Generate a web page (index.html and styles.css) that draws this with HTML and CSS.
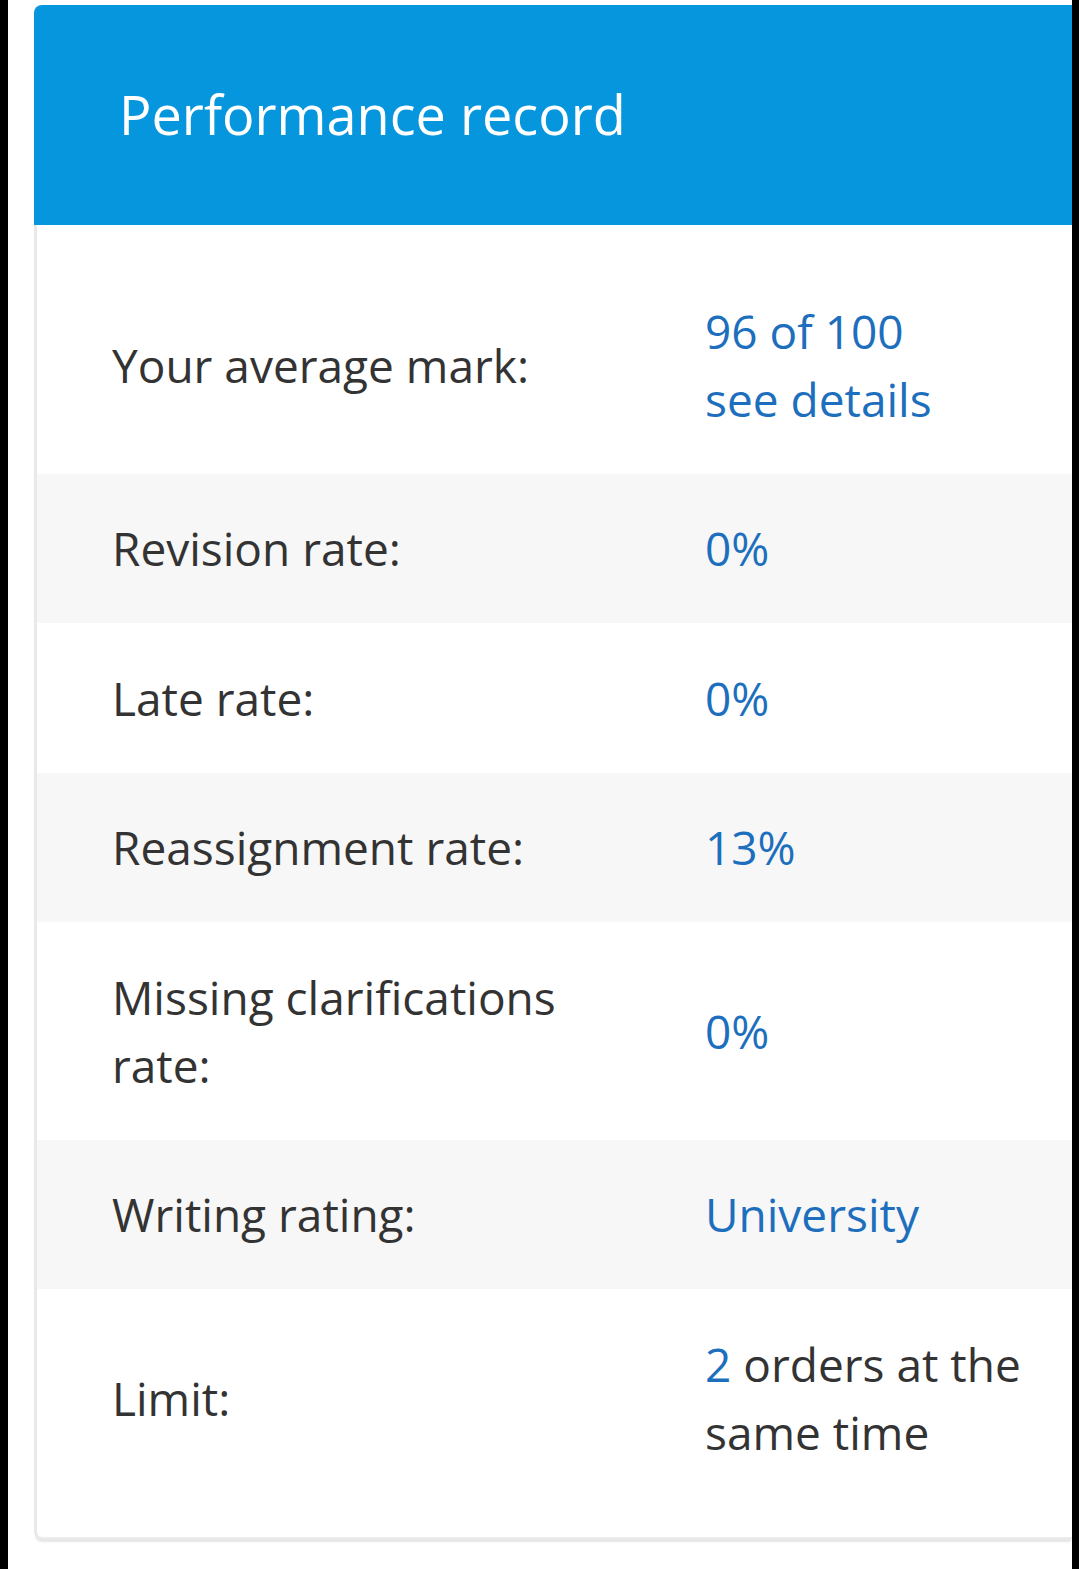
FILE: index.html
```html
<!DOCTYPE html>
<html>
<head>
<meta charset="utf-8">
<link rel="stylesheet" href="styles.css">
</head>
<body>
<div class="frame">
  <div class="edge edge-left"></div>
  <div class="stage">
    <section class="card">
      <header class="card-head">
        <h1 class="card-title">Performance record</h1>
      </header>
      <div class="card-body">
        <div class="row">
          <div class="label">Your average mark:</div>
          <div class="value"><span class="blue">96 of 100</span><br><span class="blue">see details</span></div>
        </div>
        <div class="row alt">
          <div class="label">Revision rate:</div>
          <div class="value"><span class="blue">0%</span></div>
        </div>
        <div class="row">
          <div class="label">Late rate:</div>
          <div class="value"><span class="blue">0%</span></div>
        </div>
        <div class="row alt">
          <div class="label">Reassignment rate:</div>
          <div class="value"><span class="blue">13%</span></div>
        </div>
        <div class="row">
          <div class="label">Missing clarifications rate:</div>
          <div class="value"><span class="blue">0%</span></div>
        </div>
        <div class="row alt">
          <div class="label">Writing rating:</div>
          <div class="value"><span class="blue">University</span></div>
        </div>
        <div class="row">
          <div class="label">Limit:</div>
          <div class="value"><span class="blue">2</span> orders at the same time</div>
        </div>
      </div>
    </section>
  </div>
  <div class="edge edge-right"></div>
</div>
</body>
</html>
```

FILE: styles.css
```css
* { box-sizing: border-box; }
html, body { margin: 0; padding: 0; background: #fff; }
body {
  font-family: "Open Sans", Lato, "Liberation Sans", sans-serif;
  width: 1079px;
  height: 1569px;
  overflow: hidden;
}
.frame {
  display: flex;
  height: 1569px;
}
.edge { background: #000; flex: none; }
.edge-left { width: 8px; }
.edge-right { width: 7px; }
.stage {
  flex: 1;
  padding: 5px 0 0 26px;
  overflow: hidden;
}
.card {
  background: #fff;
  border-left: 3px solid #e9e9e9;
  border-radius: 8px 0 0 8px;
  box-shadow: 0 4px 2px -1px #e6e6e6;
  border-bottom: 2px solid #ececec;
}
.card-head {
  background: #0596dd;
  height: 220px;
  border-radius: 8px 0 0 0;
  margin-left: -3px;
  padding-left: 85px;
  display: flex;
  align-items: center;
}
.card-title {
  margin: 0;
  color: #fff;
  font-weight: 400;
  font-size: 54px;
  line-height: 1.2;
  padding-bottom: 1px;
}
.card-body {
  padding: 31px 0 30px;
}
.row {
  display: flex;
  align-items: center;
  padding: 40.75px 0;
  font-size: 46px;
  line-height: 68px;
  color: #333;
}
.row.alt { background: #f7f7f7; }
.label {
  width: 668px;
  padding-left: 75px;
  padding-right: 100px;
  flex: none;
}
.value {
  flex: 1;
  color: #333;
  padding-right: 30px;
}
.blue { color: #1d6fbd; }
```
